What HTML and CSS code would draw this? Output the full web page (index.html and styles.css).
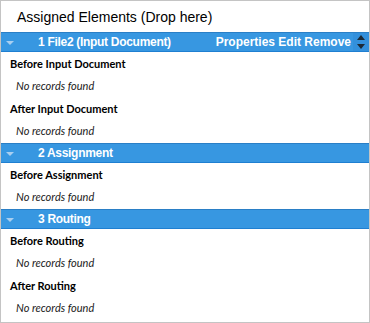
FILE: index.html
```html
<!DOCTYPE html>
<html>
<head>
	<title>Assigned Elements</title>
	<link rel="stylesheet" href="styles.css">
</head>
<body>
	<div class="panel">
		<div class="panel-title">Assigned Elements (Drop here)</div>

		<div class="group">
			<div class="group-bar">
				<span class="caret"></span>
				<span class="group-name">1 File2 (Input Document)</span>
				<span class="actions">Properties Edit Remove</span>
				<span class="sorter">
					<svg width="10" height="18" viewBox="0 0 10 18"><path d="M5 2 L9 7 L1 7 Z M5 16 L9 11 L1 11 Z" fill="#1d2a36"/></svg>
				</span>
			</div>
			<div class="sub-title">Before Input Document</div>
			<div class="empty">No records found</div>
			<div class="sub-title">After Input Document</div>
			<div class="empty">No records found</div>
		</div>

		<div class="group">
			<div class="group-bar">
				<span class="caret"></span>
				<span class="group-name">2 Assignment</span>
			</div>
			<div class="sub-title">Before Assignment</div>
			<div class="empty">No records found</div>
		</div>

		<div class="group">
			<div class="group-bar">
				<span class="caret"></span>
				<span class="group-name">3 Routing</span>
			</div>
			<div class="sub-title">Before Routing</div>
			<div class="empty">No records found</div>
			<div class="sub-title">After Routing</div>
			<div class="empty">No records found</div>
		</div>
	</div>
</body>
</html>
```

FILE: styles.css
```css
body { margin: 0; background: #ffffff; font-family: "Liberation Sans", Arial, sans-serif; }

.panel {
    width: 368px;
    height: 321px;
    border: 1px solid #c4c4c4;
    background: #ffffff;
    overflow: hidden;
}

.panel-title {
    height: 31px;
    line-height: 33px;
    padding-left: 16px;
    font-size: 14px;
    color: #000000;
}

.group { padding-bottom: 1px; }

/* Blue group header bars */
.group-bar {
    display: flex;
    align-items: center;
    height: 18px;
    background: #3797e1;
    border-top: 1px solid #2a7fc6;
    border-bottom: 1px solid #1f7fd1;
    color: #ffffff;
    font-weight: bold;
    font-size: 12px;
}

.caret {
    width: 0;
    height: 0;
    margin: 2px 0 0 5px;
    border-left: 4px solid transparent;
    border-right: 4px solid transparent;
    border-top: 4px solid #a9cff0;
}

.group-name { margin-left: 24px; flex: 1; letter-spacing: -0.3px; }

.actions { margin-right: 2px; }

.sorter {
    display: flex;
    align-items: center;
    justify-content: center;
    width: 16px;
    height: 18px;
    background: #3390dc;
}

.sub-title {
    height: 23px;
    line-height: 23px;
    padding-left: 9px;
    font-family: Lato, "Open Sans", sans-serif;
    font-weight: bold;
    font-size: 11px;
    color: #000000;
}

.empty {
    height: 22px;
    line-height: 22px;
    padding-left: 15px;
    font-family: Lato, "Open Sans", sans-serif;
    font-style: italic;
    font-size: 11px;
    color: #1a1a1a;
}
```
